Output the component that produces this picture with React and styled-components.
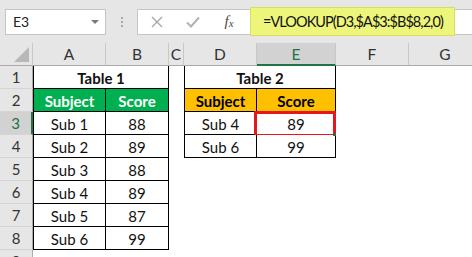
import styled, { createGlobalStyle, css } from 'styled-components';

const GlobalStyle = createGlobalStyle`
  html, body {
    margin: 0;
    padding: 0;
    background: #ffffff;
  }
  body {
    font-family: Lato, "Liberation Sans", sans-serif;
  }
`;

const Window = styled.div`
  width: 472px;
  height: 257px;
  overflow: hidden;
  display: flex;
  flex-direction: column;
  background: #ffffff;
`;

/* ---------- formula bar ---------- */

const FormulaBar = styled.div`
  flex: none;
  height: 43px;
  display: flex;
  align-items: center;
  padding-left: 5px;
  background: #e6e6e6;
  box-sizing: border-box;
`;

const NameBox = styled.div`
  width: 101px;
  height: 26px;
  box-sizing: border-box;
  border: 1px solid #c6c6c6;
  background: #ffffff;
  display: flex;
  align-items: center;
  justify-content: space-between;
  padding: 0 6px 0 7px;
  font-size: 14px;
  color: #222;
`;

const DropArrow = styled.span`
  width: 0;
  height: 0;
  border-left: 4px solid transparent;
  border-right: 4px solid transparent;
  border-top: 4px solid #7a7a7a;
`;

const Grip = styled.div`
  width: 31px;
  display: flex;
  flex-direction: column;
  align-items: center;
  gap: 2px;
  span {
    width: 2px;
    height: 2px;
    background: #a9a9a9;
  }
`;

const FormulaBox = styled.div`
  flex: 1;
  height: 26px;
  box-sizing: border-box;
  border: 1px solid #c6c6c6;
  border-right: none;
  background: #ffffff;
  display: flex;
  align-items: center;
  padding-left: 1px;
`;

const IconSlot = styled.div`
  width: 36px;
  display: flex;
  justify-content: center;
  align-items: center;
`;

const Fx = styled.span`
  font-family: "Liberation Serif", serif;
  font-style: italic;
  font-size: 15px;
  color: #4a4a4a;
  sub {
    font-size: 11px;
    vertical-align: -1px;
  }
`;

const Formula = styled.div`
  flex: none;
  margin-left: 3px;
  width: 205px;
  height: 29px;
  box-sizing: border-box;
  border: 1px solid #d6df62;
  background: #eef57b;
  display: flex;
  align-items: center;
  padding-left: 12px;
  font-size: 14.5px;
  letter-spacing: -0.95px;
  color: #111;
  white-space: nowrap;
  overflow: hidden;
`;

/* ---------- sheet ---------- */

const Sheet = styled.div`
  flex: none;
  display: grid;
  grid-template-columns: 33px 73px 63px 15px 73px 79px 73px 73px;
  grid-template-rows: repeat(10, 23px);
  font-size: 15px;
  color: #111;
`;

const Corner = styled.div`
  grid-row: 1;
  grid-column: 1;
  background: #e6e6e6;
  border-right: 1px solid #c8c8c8;
  border-bottom: 1px solid #ababab;
  display: flex;
  align-items: flex-end;
  justify-content: flex-end;
  padding: 0 3px 3px 0;
`;

const ColHead = styled.div`
  grid-row: 1;
  background: #e6e6e6;
  border-right: 1px solid #c8c8c8;
  border-bottom: 1px solid #ababab;
  display: flex;
  align-items: center;
  justify-content: center;
  font-size: 15.5px;
  color: #333;
  ${p =>
    p.$active &&
    css`
      background: #d2d2d2;
      border-bottom: 2px solid #217346;
      color: #217346;
    `}
`;

const RowHead = styled.div`
  grid-column: 1;
  grid-row: ${p => p.$row};
  background: #e6e6e6;
  border-right: 1px solid #ababab;
  border-bottom: 1px solid #d4d4d4;
  display: flex;
  align-items: center;
  justify-content: center;
  color: #333;
  ${p =>
    p.$active &&
    css`
      background: #d2d2d2;
      border-right: 2px solid #217346;
      color: #217346;
    `}
`;

const Table = styled.div`
  grid-column: ${p => p.$cols};
  grid-row: ${p => p.$rows};
  display: grid;
  grid-template-columns: ${p => p.$widths};
  grid-auto-rows: 23px;
`;

const tones = {
  green: css`
    background: #00b050;
    color: #ffffff;
    font-weight: 700;
  `,
  orange: css`
    background: #ffc000;
    color: #000000;
    font-weight: 700;
  `,
  title: css`
    font-weight: 700;
  `,
};

const Cell = styled.div`
  position: relative;
  box-sizing: border-box;
  border-right: 1px solid #000;
  border-bottom: 1px solid #000;
  display: flex;
  align-items: center;
  justify-content: center;
  padding-top: 2px;
  background: #ffffff;
  ${p => p.$first && 'border-left: 1px solid #000;'}
  ${p => p.$span && 'grid-column: span 2;'}
  ${p => p.$tone && tones[p.$tone]}
  ${p =>
    p.$selected &&
    css`
      &::after {
        content: '';
        position: absolute;
        top: -1px;
        left: -3px;
        right: -1px;
        bottom: -3px;
        border: 3px solid #e8151c;
      }
      &::before {
        content: '';
        position: absolute;
        right: -1px;
        bottom: -2px;
        width: 3px;
        height: 3px;
        background: #217346;
        z-index: 2;
      }
    `}
`;

const columns = ['A', 'B', 'C', 'D', 'E', 'F', 'G'];
const rowNumbers = [1, 2, 3, 4, 5, 6, 7, 8, 9];

const scores = [
  ['Sub 1', '88'],
  ['Sub 2', '89'],
  ['Sub 3', '88'],
  ['Sub 4', '89'],
  ['Sub 5', '87'],
  ['Sub 6', '99'],
];

const lookup = [
  ['Sub 4', '89'],
  ['Sub 6', '99'],
];

function DataTable({ title, tone, rows, cols, span, widths, selected }) {
  return (
    <Table $cols={cols} $rows={span} $widths={widths}>
      <Cell $first $span $tone="title">{title}</Cell>
      <Cell $first $tone={tone}>Subject</Cell>
      <Cell $tone={tone}>Score</Cell>
      {rows.flatMap(([subject, score], i) => [
        <Cell key={`s${i}`} $first>{subject}</Cell>,
        <Cell key={`v${i}`} $selected={selected === i}>{score}</Cell>,
      ])}
    </Table>
  );
}

export default function App() {
  return (
    <>
      <GlobalStyle />
      <Window>
        <FormulaBar>
          <NameBox>
            E3
            <DropArrow />
          </NameBox>
          <Grip>
            <span />
            <span />
            <span />
          </Grip>
          <FormulaBox>
            <IconSlot>
              <svg width="12" height="12" viewBox="0 0 12 12">
                <path d="M1 1L11 11M11 1L1 11" stroke="#a8a8a8" strokeWidth="1.4" />
              </svg>
            </IconSlot>
            <IconSlot>
              <svg width="14" height="12" viewBox="0 0 14 12">
                <path d="M1 6.5L5 10.5L13 1.5" stroke="#b2b2b2" strokeWidth="2" fill="none" />
              </svg>
            </IconSlot>
            <IconSlot>
              <Fx>
                f<sub>x</sub>
              </Fx>
            </IconSlot>
            <Formula>=VLOOKUP(D3,$A$3:$B$8,2,0)</Formula>
          </FormulaBox>
        </FormulaBar>

        <Sheet>
          <Corner>
            <svg width="15" height="15" viewBox="0 0 15 15">
              <path d="M15 0V15H0Z" fill="#b8b8b8" />
            </svg>
          </Corner>
          {columns.map(c => (
            <ColHead key={c} $active={c === 'E'}>
              {c}
            </ColHead>
          ))}
          {rowNumbers.map(n => (
            <RowHead key={n} $row={n + 1} $active={n === 3}>
              {n}
            </RowHead>
          ))}
          <DataTable
            title="Table 1"
            tone="green"
            rows={scores}
            cols="2 / 4"
            span="2 / 10"
            widths="73px 63px"
          />
          <DataTable
            title="Table 2"
            tone="orange"
            rows={lookup}
            cols="5 / 7"
            span="2 / 6"
            widths="73px 79px"
            selected={0}
          />
        </Sheet>
      </Window>
    </>
  );
}
